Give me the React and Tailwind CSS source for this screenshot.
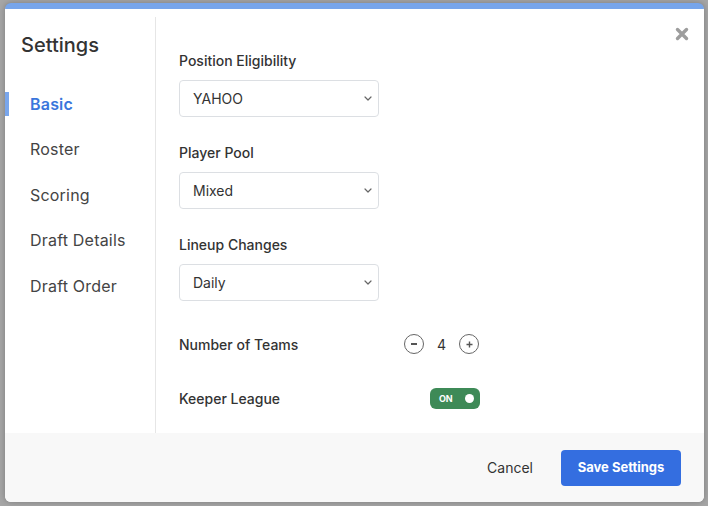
import { useState } from 'react';

function Chevron() {
    return (
        <svg width="8" height="5" viewBox="0 0 8 5" className="shrink-0">
            <path d="M1 1l3 3 3-3" fill="none" stroke="#666" strokeWidth="1.2" strokeLinecap="round" strokeLinejoin="round" />
        </svg>
    );
}

function SelectBox({ value }) {
    return (
        <div className="w-[200px] h-[37px] border border-[#dcdfe3] rounded-[4px] flex items-center justify-between pl-[13px] pr-[6px] text-[14px] text-[#333]">
            <span>{value}</span>
            <Chevron />
        </div>
    );
}

function Field({ label, value, className = '' }) {
    return (
        <div className={className}>
            <div className="text-[14px] leading-[20px] font-medium text-[#333] mb-[9px]">{label}</div>
            <SelectBox value={value} />
        </div>
    );
}

export default function App() {
    const [active, setActive] = useState('Basic');
    const [teams, setTeams] = useState(4);
    const [keeper, setKeeper] = useState(true);
    const nav = ['Basic', 'Roster', 'Scoring', 'Draft Details', 'Draft Order'];

    return (
        <div className="h-[506px] w-[708px] bg-[#a6a6a6] pt-[3px] pl-[5px] pr-[4px] pb-[4px]" style={{ fontFamily: 'Inter, "Liberation Sans", sans-serif' }}>
            <div className="relative h-full bg-white rounded-[6px] border-t-[6px] border-[#77a5ea] overflow-hidden flex flex-col shadow-[0_0_6px_rgba(0,0,0,0.25)]">
                {/* close */}
                <button className="absolute top-[18px] right-[15px] w-[14px] h-[14px]">
                    <svg width="14" height="14" viewBox="0 0 14 14">
                        <path d="M2.5 2.5l9 9M11.5 2.5l-9 9" stroke="#9d9d9d" strokeWidth="3.4" strokeLinecap="round" />
                    </svg>
                </button>

                <div className="flex flex-1">
                    {/* sidebar */}
                    <div className="w-[151px] mt-2 border-r border-[#e6e6e6]">
                        <div className="pl-[16px] pt-[14px] text-[20px] leading-[28px] font-medium text-[#333]">Settings</div>
                        <div className="mt-[22px]">
                            {nav.map((n) => (
                                <div
                                    key={n}
                                    onClick={() => setActive(n)}
                                    className={`relative h-[45.5px] flex items-center pl-[25px] text-[16px] tracking-[0.2px] cursor-pointer ${active === n ? 'text-[#3a76dc] font-semibold' : 'text-[#444]'}`}
                                >
                                    {active === n && <span className="absolute left-0 top-[11px] w-[4px] h-[24px] bg-[#79a6ec]" />}
                                    {n}
                                </div>
                            ))}
                        </div>
                    </div>

                    {/* content */}
                    <div className="flex-1 pl-[23px] pt-[42px]">
                        <Field label="Position Eligibility" value="YAHOO" />
                        <Field label="Player Pool" value="Mixed" className="mt-[26px]" />
                        <Field label="Lineup Changes" value="Daily" className="mt-[26px]" />

                        <div className="mt-[31px] flex items-center h-[24px]">
                            <div className="w-[225px] text-[14px] font-medium text-[#333]">Number of Teams</div>
                            <button
                                onClick={() => setTeams(Math.max(1, teams - 1))}
                                className="w-[20px] h-[20px] rounded-full border border-[#666] flex items-center justify-center"
                            >
                                <span className="block w-[6px] h-[1.5px] bg-[#555]" />
                            </button>
                            <div className="w-[35px] text-center text-[14px] text-[#333]">{teams}</div>
                            <button
                                onClick={() => setTeams(teams + 1)}
                                className="w-[20px] h-[20px] rounded-full border border-[#666] flex items-center justify-center"
                            >
                                <svg width="7" height="7" viewBox="0 0 7 7">
                                    <path d="M3.5 0.5v6M0.5 3.5h6" stroke="#555" strokeWidth="1.4" />
                                </svg>
                            </button>
                        </div>

                        <div className="mt-[32px] flex items-center h-[21px]">
                            <div className="w-[251px] text-[14px] font-medium text-[#333]">Keeper League</div>
                            <button
                                onClick={() => setKeeper(!keeper)}
                                className="w-[50px] h-[21px] rounded-[6px] bg-[#3e8a57] flex items-center justify-between pl-[9px] pr-[6px]"
                            >
                                <span className="text-[9px] font-bold text-white tracking-tight">ON</span>
                                <span className="w-[9px] h-[9px] rounded-full bg-white" />
                            </button>
                        </div>
                    </div>
                </div>

                {/* footer */}
                <div className="h-[69px] bg-[#f8f8f8] flex items-center justify-end pr-[23px]">
                    <button className="mr-[28px] text-[14px] text-[#333]">Cancel</button>
                    <button className="w-[120px] h-[36px] rounded-[4px] bg-[#346ee0] text-white text-[13px] font-bold">Save Settings</button>
                </div>
            </div>
        </div>
    );
}
